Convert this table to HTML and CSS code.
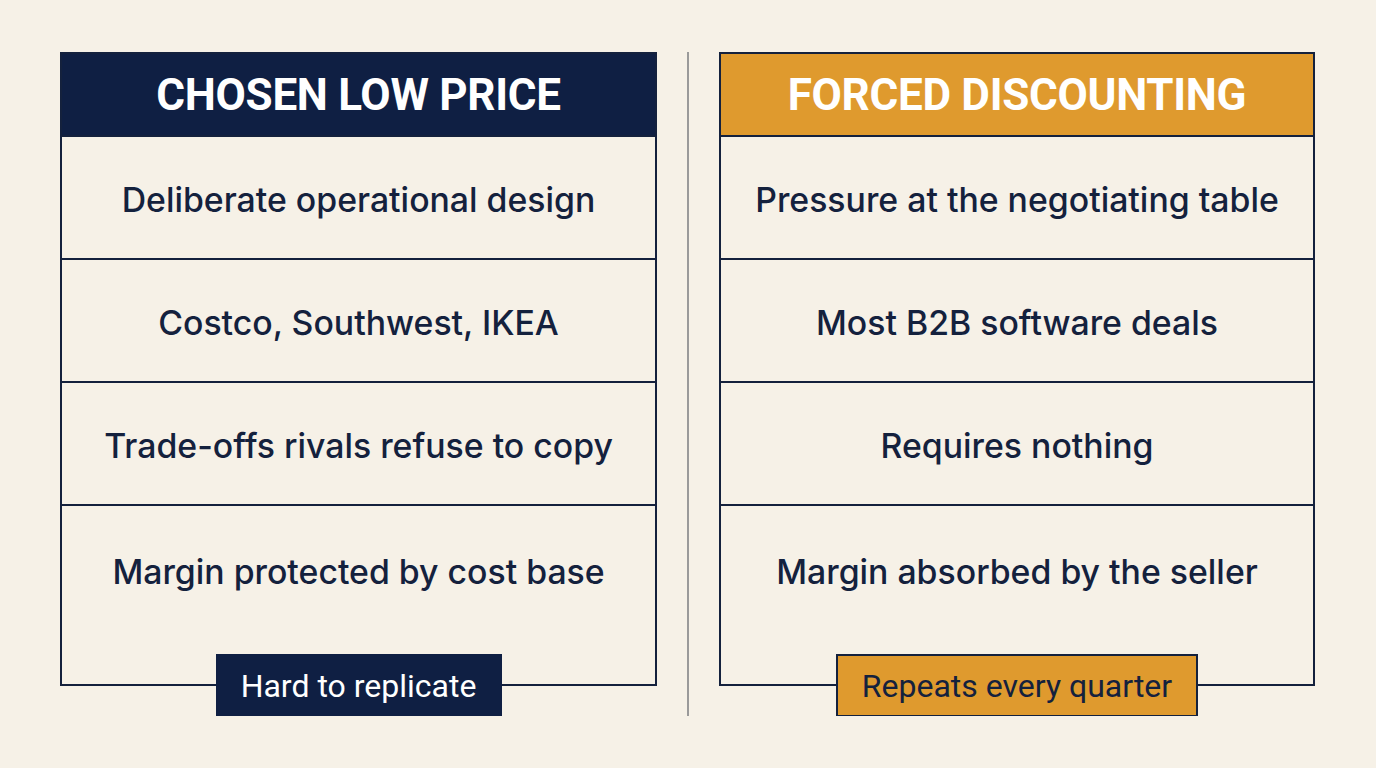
FILE: index.html
```html
<!DOCTYPE html>
<html lang="en">
<head>
    <meta charset="UTF-8">
    <title>Chosen Low Price vs Forced Discounting</title>
    <link rel="stylesheet" href="styles.css">
</head>
<body>
    <div class="compare">
        <div class="card card-navy">
            <div class="card-head">CHOSEN LOW PRICE</div>
            <div class="row">Deliberate operational design</div>
            <div class="row">Costco, Southwest, IKEA</div>
            <div class="row">Trade-offs rivals refuse to copy</div>
            <div class="row row-last">Margin protected by cost base</div>
            <div class="badge">Hard to replicate</div>
        </div>

        <div class="divider"></div>

        <div class="card card-gold">
            <div class="card-head">FORCED DISCOUNTING</div>
            <div class="row">Pressure at the negotiating table</div>
            <div class="row">Most B2B software deals</div>
            <div class="row">Requires nothing</div>
            <div class="row row-last">Margin absorbed by the seller</div>
            <div class="badge">Repeats every quarter</div>
        </div>
    </div>
</body>
</html>
```

FILE: styles.css
```css
body {
    margin: 0;
    background: #f6f1e7;
    font-family: 'Inter', 'Noto Sans', sans-serif;
    color: #14213d;
}

.compare {
    display: grid;
    grid-template-columns: 597px 2px 596px;
    column-gap: 30px;
    padding: 52px 0 0 60px;
}

.card {
    position: relative;
    border: 2px solid #14213d;
    height: 634px;
    box-sizing: border-box;
    display: flex;
    flex-direction: column;
}

.card-head {
    height: 81px;
    flex: none;
    display: flex;
    align-items: center;
    justify-content: center;
    font-family: 'Roboto', sans-serif;
    font-weight: 700;
    font-size: 44px;
    letter-spacing: -0.3px;
    color: #fff;
    border-bottom: 2px solid #14213d;
}

.card-navy .card-head {
    background: #0f1f43;
}

.card-gold .card-head {
    background: #df9a2e;
}

.row {
    height: 117px;
    padding-top: 4px;
    flex: none;
    display: flex;
    align-items: center;
    justify-content: center;
    font-size: 33.8px;
    font-weight: 500;
    border-bottom: 2px solid #14213d;
}

.row-last {
    border-bottom: none;
    flex: 1;
    align-items: flex-start;
    padding-top: 45px;
}

.badge {
    position: absolute;
    left: 50%;
    bottom: -33px;
    transform: translateX(-50%);
    height: 63px;
    box-sizing: border-box;
    display: flex;
    align-items: center;
    justify-content: center;
    font-family: 'Roboto', sans-serif;
    font-size: 32px;
    white-space: nowrap;
}

.card-navy .badge {
    background: #0f1f43;
    color: #fff;
    width: 286px;
}

.card-gold .badge {
    background: #df9a2e;
    color: #14213d;
    border: 2px solid #14213d;
    width: 362px;
}

.divider {
    background: #9a9a9a;
    height: 664px;
}
```
